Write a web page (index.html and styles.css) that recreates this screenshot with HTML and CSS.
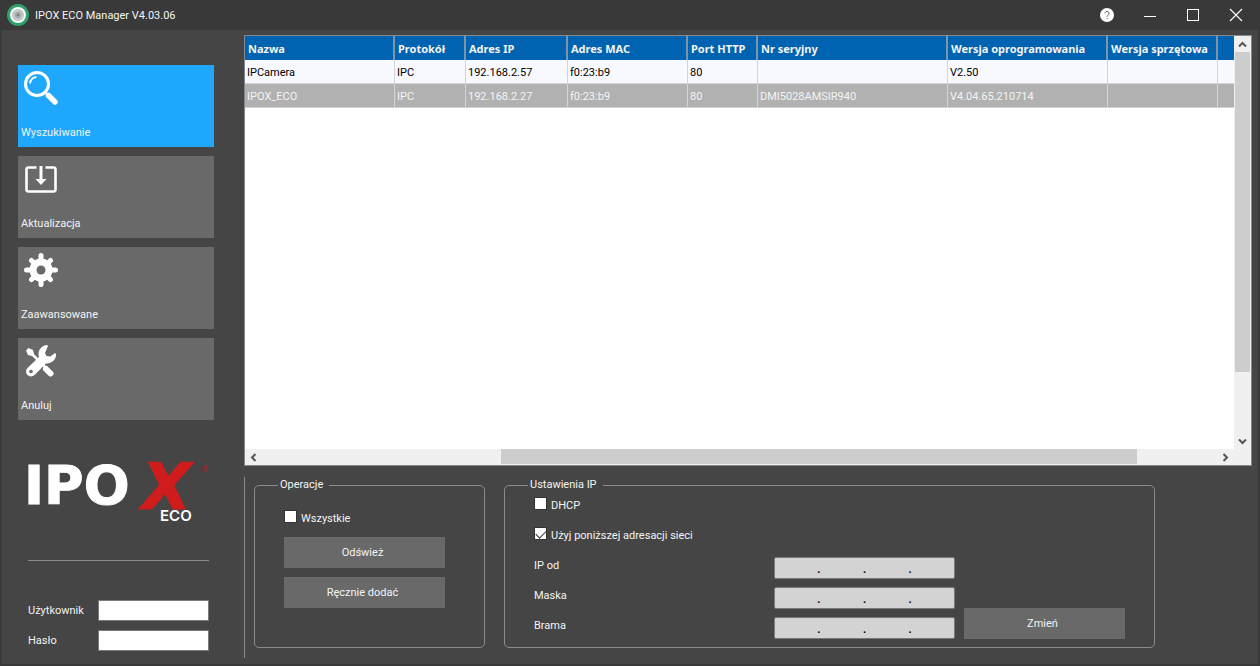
FILE: index.html
```
<!DOCTYPE html>
<html lang="pl">
<head>
  <meta charset="utf-8">
  <title>IPOX ECO Manager V4.03.06</title>
  <link rel="stylesheet" href="styles.css">
</head>
<body>
  <header class="titlebar">
    <svg class="app-icon" width="22" height="22" viewBox="0 0 22 22">
      <circle cx="11" cy="11" r="11" fill="#32a06b"/>
      <circle cx="11" cy="11" r="8" fill="#f4fbf7"/>
      <circle cx="11" cy="11" r="6" fill="#c3c6c8"/>
      <circle cx="11" cy="11" r="3" fill="#a2a5a8"/>
      <circle cx="11" cy="11" r="1" fill="#707476"/>
    </svg>
    <h1>IPOX ECO Manager V4.03.06</h1>
    <div class="window-buttons">
      <button type="button" aria-label="Pomoc">
        <svg width="14" height="14" viewBox="0 0 14 14">
          <circle cx="7" cy="7" r="7" fill="#fff"/>
          <path d="M5 5.4a2 2 0 1 1 3.2 1.6C7.3 7.6 7 8 7 8.8M7 10v1.1" fill="none" stroke="#555" stroke-width="1"/>
        </svg>
      </button>
      <button type="button" aria-label="Minimalizuj">
        <svg width="14" height="14" viewBox="0 0 14 14"><path d="M1 8.5h12" stroke="#fff"/></svg>
      </button>
      <button type="button" aria-label="Maksymalizuj">
        <svg width="14" height="14" viewBox="0 0 14 14"><rect x="1.5" y="1.5" width="11" height="11" fill="none" stroke="#fff"/></svg>
      </button>
      <button type="button" aria-label="Zamknij">
        <svg width="14" height="14" viewBox="0 0 14 14"><path d="M1 1l12 12M13 1L1 13" stroke="#fff" stroke-width="1.1"/></svg>
      </button>
    </div>
  </header>

  <div class="window">
    <aside class="sidebar">
      <nav class="menu">
        <button type="button" class="tile active">
          <svg width="36" height="36" viewBox="0 0 36 36">
            <circle cx="14" cy="14" r="11.5" fill="none" stroke="#fff" stroke-width="3"/>
            <path d="M7 13.500a7 7 0 0 1 6.500-6.500" fill="none" stroke="#fff" stroke-width="2"/>
            <path d="M22 22l2.500 2.500" stroke="#fff" stroke-width="2"/>
            <path d="M25.500 25.500l6.500 6.500" stroke="#fff" stroke-width="5.500" stroke-linecap="round"/>
          </svg>
          <span>Wyszukiwanie</span>
        </button>
        <button type="button" class="tile">
          <svg width="36" height="36" viewBox="0 0 36 36">
            <path d="M14 6.500H6a2 2 0 0 0-2 2v20a2 2 0 0 0 2 2h25a2 2 0 0 0 2-2v-20a2 2 0 0 0-2-2H23" transform="translate(-.5 0)" fill="none" stroke="#fff" stroke-width="2.600"/>
            <path d="M18 5v14" stroke="#fff" stroke-width="3"/>
            <path d="M12.500 18h11l-5.500 6z" fill="#fff"/>
          </svg>
          <span>Aktualizacja</span>
        </button>
        <button type="button" class="tile">
          <svg width="36" height="36" viewBox="0 0 36 36">
            <g stroke="#fff" stroke-width="5" stroke-linecap="round">
              <path d="M18 3.500v29M3.500 18h29M8.500 8.500l19 19M27.500 8.500l-19 19"/>
            </g>
            <circle cx="18" cy="18" r="11.500" fill="#fff"/>
            <circle cx="18" cy="18" r="4.500" class="gear-hole"/>
          </svg>
          <span>Zaawansowane</span>
        </button>
        <button type="button" class="tile">
          <svg width="36" height="36" viewBox="0 0 36 36">
            <g transform="translate(0 2)">
              <path d="M6.500 6.500l18 18" stroke="#fff" stroke-width="2.500"/>
              <path d="M3 5.500l2.500-2.500 4.500 2 1 4-2 2-4-1z" fill="#fff"/>
              <path d="M23 24l4.500 4.500" stroke="#fff" stroke-width="6" stroke-linecap="round"/>
              <path d="M24 0a9 9 0 0 0-8 12L4.500 23a4.900 4.900 0 1 0 7 7L23 18.500a9 9 0 0 0 10-9.500l-1-1-4.500 3.500-4-.5-1.500-3L25 1z" fill="#fff"/>
              <circle cx="8" cy="26.500" r="1.800" class="gear-hole"/>
            </g>
          </svg>
          <span>Anuluj</span>
        </button>
      </nav>

      <svg class="logo" width="186" height="94" viewBox="0 0 186 94" role="img" aria-label="IPOX ECO">
        <text x="-4" y="73" class="logo-ipo">IPO</text>
        <text x="114" y="78" class="logo-x">X</text>
        <text x="173" y="41" class="logo-reg">®</text>
        <text x="132" y="90" class="logo-eco">ECO</text>
      </svg>

      <form class="login">
        <label for="user">Użytkownik</label>
        <input type="text" id="user">
        <label for="pass">Hasło</label>
        <input type="password" id="pass">
      </form>
    </aside>

    <main class="content">
      <section class="list">
        <div class="list-view">
          <table>
            <colgroup>
              <col class="w-name"><col class="w-proto"><col class="w-ip"><col class="w-mac"><col class="w-port">
              <col class="w-serial"><col class="w-soft"><col class="w-hard"><col>
            </colgroup>
            <thead>
              <tr>
                <th>Nazwa</th><th>Protokół</th><th>Adres IP</th><th>Adres MAC</th><th>Port HTTP</th>
                <th>Nr seryjny</th><th>Wersja oprogramowania</th><th>Wersja sprzętowa</th><th></th>
              </tr>
            </thead>
            <tbody>
              <tr>
                <td>IPCamera</td><td>IPC</td><td>192.168.2.57</td><td>f0:23:b9</td><td>80</td>
                <td></td><td>V2.50</td><td></td><td></td>
              </tr>
              <tr class="selected">
                <td>IPOX_ECO</td><td>IPC</td><td>192.168.2.27</td><td>f0:23:b9</td><td>80</td>
                <td>DMI5028AMSIR940</td><td>V4.04.65.210714</td><td></td><td></td>
              </tr>
            </tbody>
          </table>
        </div>
        <div class="vbar">
          <button type="button" aria-label="W górę"><svg width="9" height="9" viewBox="0 0 9 9"><path d="M1 6.500L4.500 3L8 6.500"/></svg></button>
          <div class="track"><div class="thumb"></div></div>
          <button type="button" aria-label="W dół"><svg width="9" height="9" viewBox="0 0 9 9"><path d="M1 2.500L4.500 6L8 2.500"/></svg></button>
        </div>
        <div class="hbar">
          <button type="button" aria-label="W lewo"><svg width="9" height="9" viewBox="0 0 9 9"><path d="M6.500 1L3 4.500L6.500 8"/></svg></button>
          <div class="track"><div class="thumb"></div></div>
          <button type="button" aria-label="W prawo"><svg width="9" height="9" viewBox="0 0 9 9"><path d="M2.500 1L6 4.500L2.500 8"/></svg></button>
        </div>
      </section>

      <section class="settings">
        <fieldset class="operations">
          <legend>Operacje</legend>
          <label class="check"><input type="checkbox"> Wszystkie</label>
          <button type="button" class="btn">Odśwież</button>
          <button type="button" class="btn">Ręcznie dodać</button>
        </fieldset>

        <fieldset class="ip-settings">
          <legend>Ustawienia IP</legend>
          <label class="check"><input type="checkbox"> DHCP</label>
          <label class="check"><input type="checkbox" checked> Użyj poniższej adresacji sieci</label>
          <div class="ip-form">
            <div class="ip-rows">
              <label for="ip1">IP od</label>
              <div class="ip"><input id="ip1" type="text" disabled>.<input type="text" aria-label="IP od 2" disabled>.<input type="text" aria-label="IP od 3" disabled>.<input type="text" aria-label="IP od 4" disabled></div>
              <label for="mask1">Maska</label>
              <div class="ip"><input id="mask1" type="text" disabled>.<input type="text" aria-label="Maska 2" disabled>.<input type="text" aria-label="Maska 3" disabled>.<input type="text" aria-label="Maska 4" disabled></div>
              <label for="gate1">Brama</label>
              <div class="ip"><input id="gate1" type="text" disabled>.<input type="text" aria-label="Brama 2" disabled>.<input type="text" aria-label="Brama 3" disabled>.<input type="text" aria-label="Brama 4" disabled></div>
            </div>
            <button type="button" class="btn">Zmień</button>
          </div>
        </fieldset>
      </section>
    </main>
  </div>
</body>
</html>
```
FILE: styles.css
```
* {
  box-sizing: border-box;
}

body {
  margin: 0;
  min-height: 100vh;
  display: flex;
  flex-direction: column;
  background-color: #393939;
  color: #f4f4f4;
  font-family: Tahoma, Roboto, sans-serif;
  font-size: 11px;
  line-height: 16px;
}

button, input {
  font: inherit;
  color: inherit;
}

button {
  border: none;
  padding: 0;
  background: none;
}

/* title bar */
.titlebar {
  display: flex;
  align-items: center;
  height: 30px;
  padding-left: 7px;
}

.titlebar h1 {
  flex: 1;
  margin: 2px 0 0 6px;
  font-size: 11px;
  font-weight: normal;
}

.window-buttons {
  display: flex;
  padding-right: 3px;
}

.window-buttons button {
  display: flex;
  align-items: center;
  justify-content: center;
  width: 43px;
  height: 30px;
}

.window {
  flex: 1;
  display: flex;
  gap: 30px;
  margin: 0 2px 2px;
  padding: 5px 6px 6px 16px;
  background-color: #454545;
}

/* sidebar */
.sidebar {
  width: 196px;
  padding-top: 30px;
}

.menu {
  display: flex;
  flex-direction: column;
  gap: 9px;
}

.tile {
  display: flex;
  flex-direction: column;
  justify-content: space-between;
  align-items: flex-start;
  height: 82px;
  padding: 5px 3px 6px;
  background-color: #696969;
}

.tile svg {
  margin-left: 2px;
}

.tile.active {
  background-color: #1ea7fd;
}

.gear-hole {
  fill: #696969;
}

.logo {
  display: block;
  margin: 11px 0 0 10px;
}

.logo text {
  font-family: "DejaVu Sans", sans-serif;
  font-weight: bold;
}

.logo .logo-ipo {
  font-size: 54px;
  fill: #fff;
  stroke: #fff;
}

.logo .logo-x {
  font-size: 64px;
  font-style: italic;
  fill: #d01c1c;
  stroke: #d01c1c;
}

.logo .logo-reg {
  font-size: 8px;
  font-weight: normal;
  fill: #b02020;
}

.logo .logo-eco {
  font-family: Inter, sans-serif;
  font-size: 15px;
  font-weight: 600;
  fill: #fff;
}

.login {
  display: grid;
  grid-template-columns: 70px 1fr;
  gap: 9px 0;
  align-items: center;
  margin: 35px 5px 0 10px;
  padding-top: 39px;
  border-top: 1px solid #8c8c8c;
}

.login input {
  width: 100%;
  height: 21px;
  border: 1px solid #7a7a7a;
  background-color: #fff;
  color: #000;
}

/* device list */
.content {
  flex: 1;
  min-width: 0;
  display: flex;
  flex-direction: column;
  gap: 11px;
}

.list {
  flex: 1;
  display: grid;
  grid-template-columns: 1fr 17px;
  grid-template-rows: 1fr 16px;
  border: 1px solid #828790;
  background-color: #f0f0f0;
}

.list-view {
  overflow: hidden;
  background-color: #fff;
}

table {
  width: 100%;
  table-layout: fixed;
  border-collapse: separate;
  border-spacing: 0;
}

.w-name { width: 150px; }
.w-proto { width: 71px; }
.w-ip { width: 102px; }
.w-mac { width: 120px; }
.w-port { width: 70px; }
.w-serial { width: 190px; }
.w-soft { width: 160px; }
.w-hard { width: 110px; }

th, td {
  height: 24px;
  padding: 2px 0 0 3px;
  text-align: left;
  white-space: nowrap;
}

th {
  background-color: #0063b1;
  border-right: 2px solid #7d95a8;
  font-family: Tahoma, "Noto Sans", sans-serif;
  font-weight: bold;
}

td {
  padding-left: 2px;
  background-color: #f8f9ff;
  color: #000;
  border-right: 1px solid #d4d4d4;
  border-bottom: 1px solid #d4d4d4;
}

th:last-child, td:last-child {
  border-right: none;
}

.selected td {
  background-color: #b1b1b1;
  color: #f4f4f4;
}

/* scroll bars */
.vbar, .hbar {
  display: flex;
}

.vbar {
  flex-direction: column;
}

.vbar button, .hbar button {
  display: flex;
  align-items: center;
  justify-content: center;
  width: 17px;
  height: 16px;
}

.vbar path, .hbar path {
  fill: none;
  stroke: #555;
  stroke-width: 2;
}

.track {
  flex: 1;
}

.thumb {
  background-color: #cdcdcd;
}

.vbar .thumb {
  height: 84%;
  margin: 0 1px;
}

.hbar .thumb {
  width: calc(200% / 3);
  height: 15px;
  margin-left: 25%;
}

/* bottom settings */
.settings {
  display: flex;
  align-items: stretch;
  gap: 19px;
  height: 181px;
  padding: 0 0 10px 9px;
  border-left: 1px solid #8c8c8c;
}

fieldset {
  min-width: 0;
  margin: 0;
  border: 1px solid #8c8c8c;
  border-radius: 5px;
}

legend {
  padding: 0 6px 0 2px;
}

.operations {
  width: 231px;
  padding: 17px 39px 0 29px;
}

.operations legend,
.ip-settings legend {
  margin-left: -6px;
}

.operations .btn {
  display: block;
  margin-top: 9px;
}

.operations .check {
  margin-bottom: 11px;
}

.check {
  display: flex;
  align-items: flex-start;
  gap: 4px;
  height: 16px;
  line-height: 18px;
}

.check input {
  appearance: none;
  width: 13px;
  height: 13px;
  margin: 0;
  border: 1px solid #333;
  background-color: #fff;
}

.check input:checked::before {
  content: "";
  display: block;
  width: 9px;
  height: 5px;
  margin: 2px 0 0 1px;
  border-left: 1px solid #333;
  border-bottom: 1px solid #333;
  transform: rotate(-45deg);
}

.btn {
  width: 161px;
  height: 31px;
  padding-right: 4px;
  background-color: #696969;
}

.ip-settings {
  flex: 0 1 651px;
  padding: 4px 29px 0;
}

.ip-settings .check + .check {
  margin-top: 14px;
}

.ip-form {
  display: flex;
  justify-content: space-between;
  align-items: flex-end;
  margin-top: 14px;
}

.ip-rows {
  display: grid;
  grid-template-columns: 240px 181px;
  row-gap: 8px;
  line-height: 18px;
}

.ip {
  display: flex;
  align-items: center;
  height: 22px;
  padding-top: 4px;
  border: 1px solid #7a7a7a;
  border-radius: 2px;
  background-color: #d3d3d3;
  color: #000;
  font-weight: bold;
}

.ip input {
  flex: 1;
  min-width: 0;
  height: 16px;
  padding: 0;
  border: none;
  background: none;
  text-align: center;
}
```
